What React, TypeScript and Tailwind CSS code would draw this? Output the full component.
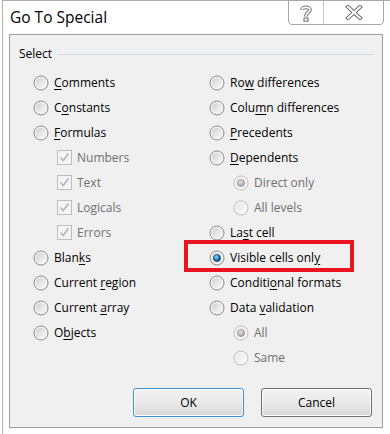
import React from "react";

const FONT = { fontFamily: '"Open Sans", "Noto Sans", sans-serif' };

function Defs() {
  return (
    <svg width="0" height="0" className="absolute">
      <defs>
        <linearGradient id="rFill" x1="0" y1="0" x2="1" y2="1">
          <stop offset="0" stopColor="#cfcfcf" />
          <stop offset="1" stopColor="#fbfbfb" />
        </linearGradient>
        <linearGradient id="rFillOff" x1="0" y1="0" x2="1" y2="1">
          <stop offset="0" stopColor="#e6e6e6" />
          <stop offset="1" stopColor="#fbfbfb" />
        </linearGradient>
        <radialGradient id="dotOn" cx="0.4" cy="0.35" r="0.7">
          <stop offset="0" stopColor="#a6e4ff" />
          <stop offset="0.45" stopColor="#2c8cc8" />
          <stop offset="1" stopColor="#0c3f6a" />
        </radialGradient>
        <radialGradient id="dotOff" cx="0.4" cy="0.35" r="0.7">
          <stop offset="0" stopColor="#e2e2e2" />
          <stop offset="1" stopColor="#9c9c9c" />
        </radialGradient>
        <linearGradient id="btn" x1="0" y1="0" x2="0" y2="1">
          <stop offset="0" stopColor="#f2f2f2" />
          <stop offset="1" stopColor="#d6d6d6" />
        </linearGradient>
      </defs>
    </svg>
  );
}

function Radio({ on, off }: { on?: boolean; off?: boolean }) {
  return (
    <svg width="16" height="16" viewBox="0 0 16 16" className="shrink-0">
      <circle cx="8" cy="8" r="7" fill="#f7f7f7" stroke={off ? "#bcbcbc" : "#888888"} />
      <circle cx="8" cy="8" r="5.3" fill={off ? "url(#rFillOff)" : "url(#rFill)"} />
      {on && <circle cx="8" cy="8" r="3.6" fill={off ? "url(#dotOff)" : "url(#dotOn)"} stroke={off ? "#8d8d8d" : "#10385a"} strokeWidth="0.6" />}
    </svg>
  );
}

function Check() {
  return (
    <svg width="15" height="15" viewBox="0 0 15 15" className="shrink-0">
      <rect x="0.5" y="0.5" width="14" height="14" fill="#f4f4f4" stroke="#bdbdbd" />
      <path d="M3.5 7.5 L6.2 10.5 L11.5 3.5" fill="none" stroke="#b5b5b5" strokeWidth="1.6" />
    </svg>
  );
}

function Lbl({ t, u }: { t: string; u?: number }) {
  if (u === undefined) return <>{t}</>;
  return (
    <>
      {t.slice(0, u)}
      <span className="underline decoration-1 underline-offset-[2px]">{t[u]}</span>
      {t.slice(u + 1)}
    </>
  );
}

type Item = { t: string; u?: number; kind?: "radio" | "check"; on?: boolean; off?: boolean; sub?: boolean };

const left: Item[] = [
  { t: "Comments", u: 0 },
  { t: "Constants", u: 1 },
  { t: "Formulas", u: 0 },
  { t: "Numbers", kind: "check", off: true, sub: true },
  { t: "Text", kind: "check", off: true, sub: true },
  { t: "Logicals", kind: "check", off: true, sub: true },
  { t: "Errors", kind: "check", off: true, sub: true },
  { t: "Blanks", u: 4 },
  { t: "Current region", u: 8 },
  { t: "Current array", u: 8 },
  { t: "Objects", u: 1 },
];

const right: Item[] = [
  { t: "Row differences", u: 2 },
  { t: "Column differences", u: 4 },
  { t: "Precedents", u: 0 },
  { t: "Dependents", u: 0 },
  { t: "Direct only", on: true, off: true, sub: true },
  { t: "All levels", off: true, sub: true },
  { t: "Last cell", u: 2 },
  { t: "Visible cells only", u: 17, on: true },
  { t: "Conditional formats", u: 7 },
  { t: "Data validation", u: 5 },
  { t: "All", on: true, off: true, sub: true },
  { t: "Same", off: true, sub: true },
];

function Row({ it }: { it: Item }) {
  return (
    <div className={`flex h-[25px] items-center gap-[5px] ${it.sub ? "pl-6" : ""}`}>
      {it.kind === "check" ? <Check /> : <Radio on={it.on} off={it.off} />}
      <span className={`text-[12px] leading-4 ${it.off ? "text-[#6f6f6f]" : "text-black"}`}>
        <Lbl t={it.t} u={it.u} />
      </span>
    </div>
  );
}

function Btn({ label, main }: { label: string; main?: boolean }) {
  return (
    <div
      className={`flex h-[29px] w-[111px] items-center justify-center rounded-[3px] border bg-gradient-to-b from-[#f3f3f3] via-[#e9e9e9] to-[#d9d9d9] text-[12px] text-black shadow-[inset_0_0_0_1px_#fcfcfc] ${
        main ? "border-[#3c93d8]" : "border-[#707070]"
      }`}
    >
      {label}
    </div>
  );
}

export default function App() {
  return (
    <div className="relative h-[434px] w-[390px] overflow-hidden bg-white pl-[2px]" style={FONT}>
      <Defs />
      <div className="flex h-full flex-col border-l border-t border-[#b0b0b0]">
        <div className="flex h-[33px] items-start">
          <div className="pl-[7px] pt-[6px] text-[15.5px] leading-5 text-black">Go To Special</div>
          <div className="-mt-px ml-auto mr-[6px] flex h-[25px] rounded-b-[4px] border border-[#a8a8a8]">
            <div className="flex w-[35px] items-center justify-center border-r border-[#c4c4c4]">
              <svg width="14" height="18" viewBox="0 0 14 18">
                <path d="M3 6 C3 2.5 11 2.5 11 6 C11 8.5 7 8.5 7 11.5 L7 12.5" fill="none" stroke="#6b6b6b" strokeWidth="3.6" strokeLinejoin="round" />
                <path d="M3 6 C3 2.5 11 2.5 11 6 C11 8.5 7 8.5 7 11.5 L7 12.5" fill="none" stroke="#ffffff" strokeWidth="1.6" strokeLinejoin="round" />
                <rect x="5" y="14" width="4" height="3.2" fill="#ffffff" stroke="#6b6b6b" />
              </svg>
            </div>
            <div className="flex w-[59px] items-center justify-center">
              <svg width="18" height="15" viewBox="0 0 18 15">
                <path d="M3 2 L15 13 M15 2 L3 13" fill="none" stroke="#6b6b6b" strokeWidth="4" strokeLinecap="square" />
                <path d="M3 2 L15 13 M15 2 L3 13" fill="none" stroke="#ffffff" strokeWidth="2" strokeLinecap="square" />
              </svg>
            </div>
          </div>
        </div>
        <div className="ml-[6px] flex h-[394px] w-[374px] flex-col border border-[#9c9c9c] bg-[#f0f0f0]">
          <div className="flex items-center pl-[9px] pr-[8px] pt-[11px]">
            <span className="text-[12px] leading-4 text-black">Select</span>
            <div className="ml-[5px] h-px flex-1 bg-[#d5dfe7]" />
          </div>
          <div className="mt-[8px] flex pl-[23px]">
            <div className="w-[176px]">
              {left.map((it) => (
                <Row key={it.t} it={it} />
              ))}
            </div>
            <div className="flex-1">
              {right.map((it) => (
                <Row key={it.t} it={it} />
              ))}
            </div>
          </div>
          <div className="mt-[18px] flex justify-end gap-[17px] pr-[10px]">
            <Btn label="OK" main />
            <Btn label="Cancel" />
          </div>
        </div>
      </div>
      <div className="absolute left-[184px] top-[240px] h-[32px] w-[170px] border-4 border-[#e8141f]" />
    </div>
  );
}
